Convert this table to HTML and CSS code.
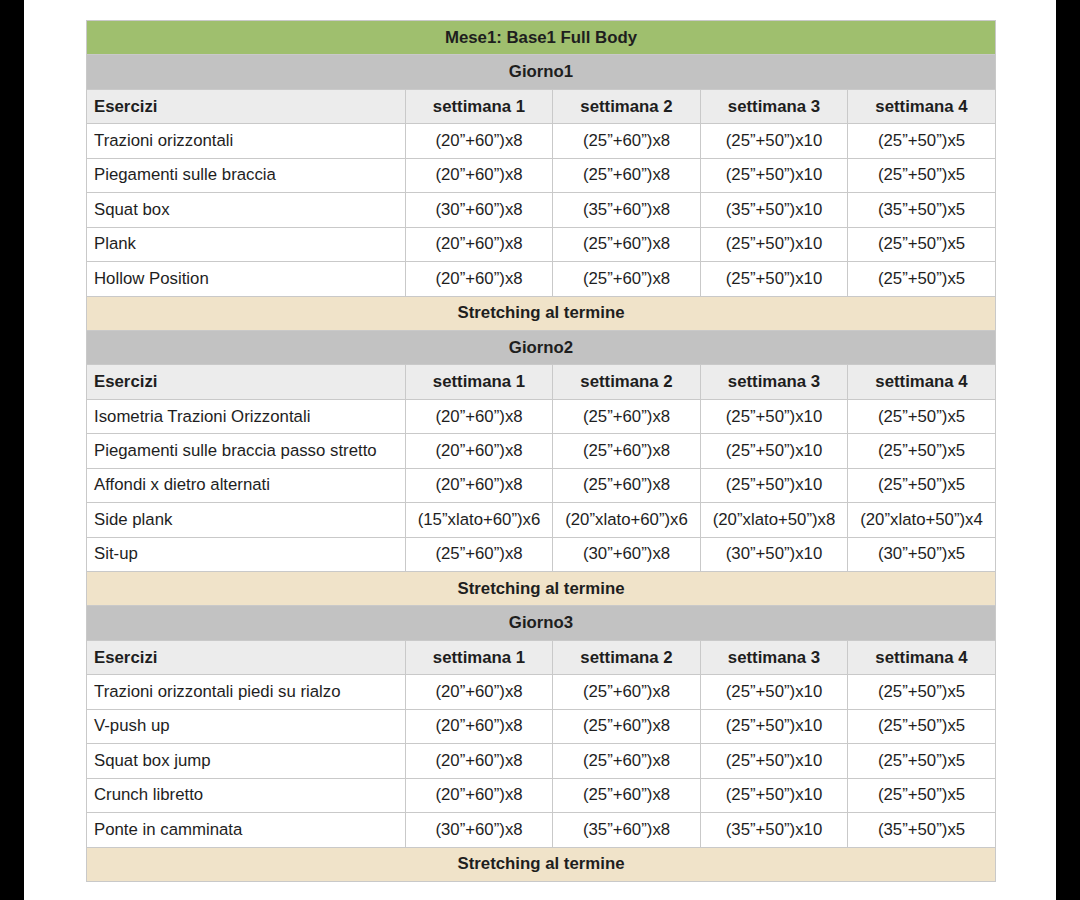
FILE: index.html
```html
<!DOCTYPE html>
<html lang="it">
<head>
<meta charset="utf-8">
<title>Mese1: Base1 Full Body</title>
<link rel="stylesheet" href="styles.css">
</head>
<body>
<div class="page">
<table class="plan">
<colgroup>
<col class="c-ex"><col class="c-w"><col class="c-w2"><col class="c-w"><col class="c-w2">
</colgroup>
<tbody>
<tr class="title"><td colspan="5">Mese1: Base1 Full Body</td></tr>

<tr class="day"><td colspan="5">Giorno1</td></tr>
<tr class="head"><td class="name">Esercizi</td><td>settimana 1</td><td>settimana 2</td><td>settimana 3</td><td>settimana 4</td></tr>
<tr><td class="name">Trazioni orizzontali</td><td>(20”+60”)x8</td><td>(25”+60”)x8</td><td>(25”+50”)x10</td><td>(25”+50”)x5</td></tr>
<tr><td class="name">Piegamenti sulle braccia</td><td>(20”+60”)x8</td><td>(25”+60”)x8</td><td>(25”+50”)x10</td><td>(25”+50”)x5</td></tr>
<tr><td class="name">Squat box</td><td>(30”+60”)x8</td><td>(35”+60”)x8</td><td>(35”+50”)x10</td><td>(35”+50”)x5</td></tr>
<tr><td class="name">Plank</td><td>(20”+60”)x8</td><td>(25”+60”)x8</td><td>(25”+50”)x10</td><td>(25”+50”)x5</td></tr>
<tr><td class="name">Hollow Position</td><td>(20”+60”)x8</td><td>(25”+60”)x8</td><td>(25”+50”)x10</td><td>(25”+50”)x5</td></tr>
<tr class="stretch"><td colspan="5">Stretching al termine</td></tr>

<tr class="day"><td colspan="5">Giorno2</td></tr>
<tr class="head"><td class="name">Esercizi</td><td>settimana 1</td><td>settimana 2</td><td>settimana 3</td><td>settimana 4</td></tr>
<tr><td class="name">Isometria Trazioni Orizzontali</td><td>(20”+60”)x8</td><td>(25”+60”)x8</td><td>(25”+50”)x10</td><td>(25”+50”)x5</td></tr>
<tr><td class="name">Piegamenti sulle braccia passo stretto</td><td>(20”+60”)x8</td><td>(25”+60”)x8</td><td>(25”+50”)x10</td><td>(25”+50”)x5</td></tr>
<tr><td class="name">Affondi x dietro alternati</td><td>(20”+60”)x8</td><td>(25”+60”)x8</td><td>(25”+50”)x10</td><td>(25”+50”)x5</td></tr>
<tr><td class="name">Side plank</td><td>(15”xlato+60”)x6</td><td>(20”xlato+60”)x6</td><td>(20”xlato+50”)x8</td><td>(20”xlato+50”)x4</td></tr>
<tr><td class="name">Sit-up</td><td>(25”+60”)x8</td><td>(30”+60”)x8</td><td>(30”+50”)x10</td><td>(30”+50”)x5</td></tr>
<tr class="stretch"><td colspan="5">Stretching al termine</td></tr>

<tr class="day"><td colspan="5">Giorno3</td></tr>
<tr class="head"><td class="name">Esercizi</td><td>settimana 1</td><td>settimana 2</td><td>settimana 3</td><td>settimana 4</td></tr>
<tr><td class="name">Trazioni orizzontali piedi su rialzo</td><td>(20”+60”)x8</td><td>(25”+60”)x8</td><td>(25”+50”)x10</td><td>(25”+50”)x5</td></tr>
<tr><td class="name">V-push up</td><td>(20”+60”)x8</td><td>(25”+60”)x8</td><td>(25”+50”)x10</td><td>(25”+50”)x5</td></tr>
<tr><td class="name">Squat box jump</td><td>(20”+60”)x8</td><td>(25”+60”)x8</td><td>(25”+50”)x10</td><td>(25”+50”)x5</td></tr>
<tr><td class="name">Crunch libretto</td><td>(20”+60”)x8</td><td>(25”+60”)x8</td><td>(25”+50”)x10</td><td>(25”+50”)x5</td></tr>
<tr><td class="name">Ponte in camminata</td><td>(30”+60”)x8</td><td>(35”+60”)x8</td><td>(35”+50”)x10</td><td>(35”+50”)x5</td></tr>
<tr class="stretch"><td colspan="5">Stretching al termine</td></tr>
</tbody>
</table>
</div>
</body>
</html>
```

FILE: styles.css
```css
html, body {
  margin: 0;
  padding: 0;
  background: #000;
  height: 100%;
}
.page {
  margin: 0 24px;
  background: #fff;
  min-height: 900px;
  padding: 20px 0 0 62px;
  box-sizing: border-box;
}
.plan {
  border-collapse: collapse;
  table-layout: fixed;
  width: 909px;
  font-family: "Liberation Sans", Arial, sans-serif;
  font-size: 16.8px;
  color: #1e1e1e;
}
.c-ex { width: 319px; }
.c-w { width: 147px; }
.c-w2 { width: 148px; }
.plan td {
  border: 1px solid #c9c9c9;
  height: 34.44px;
  padding: 0 2px;
  text-align: center;
  white-space: nowrap;
  box-sizing: border-box;
}
.plan td.name {
  text-align: left;
  padding-left: 7px;
}
.title td {
  background: #9fbf6e;
  font-weight: bold;
}
.day td {
  background: #c2c2c2;
  font-weight: bold;
}
.head td {
  background: #ececec;
  font-weight: bold;
}
.stretch td {
  background: #f0e3c9;
  font-weight: bold;
}
```
